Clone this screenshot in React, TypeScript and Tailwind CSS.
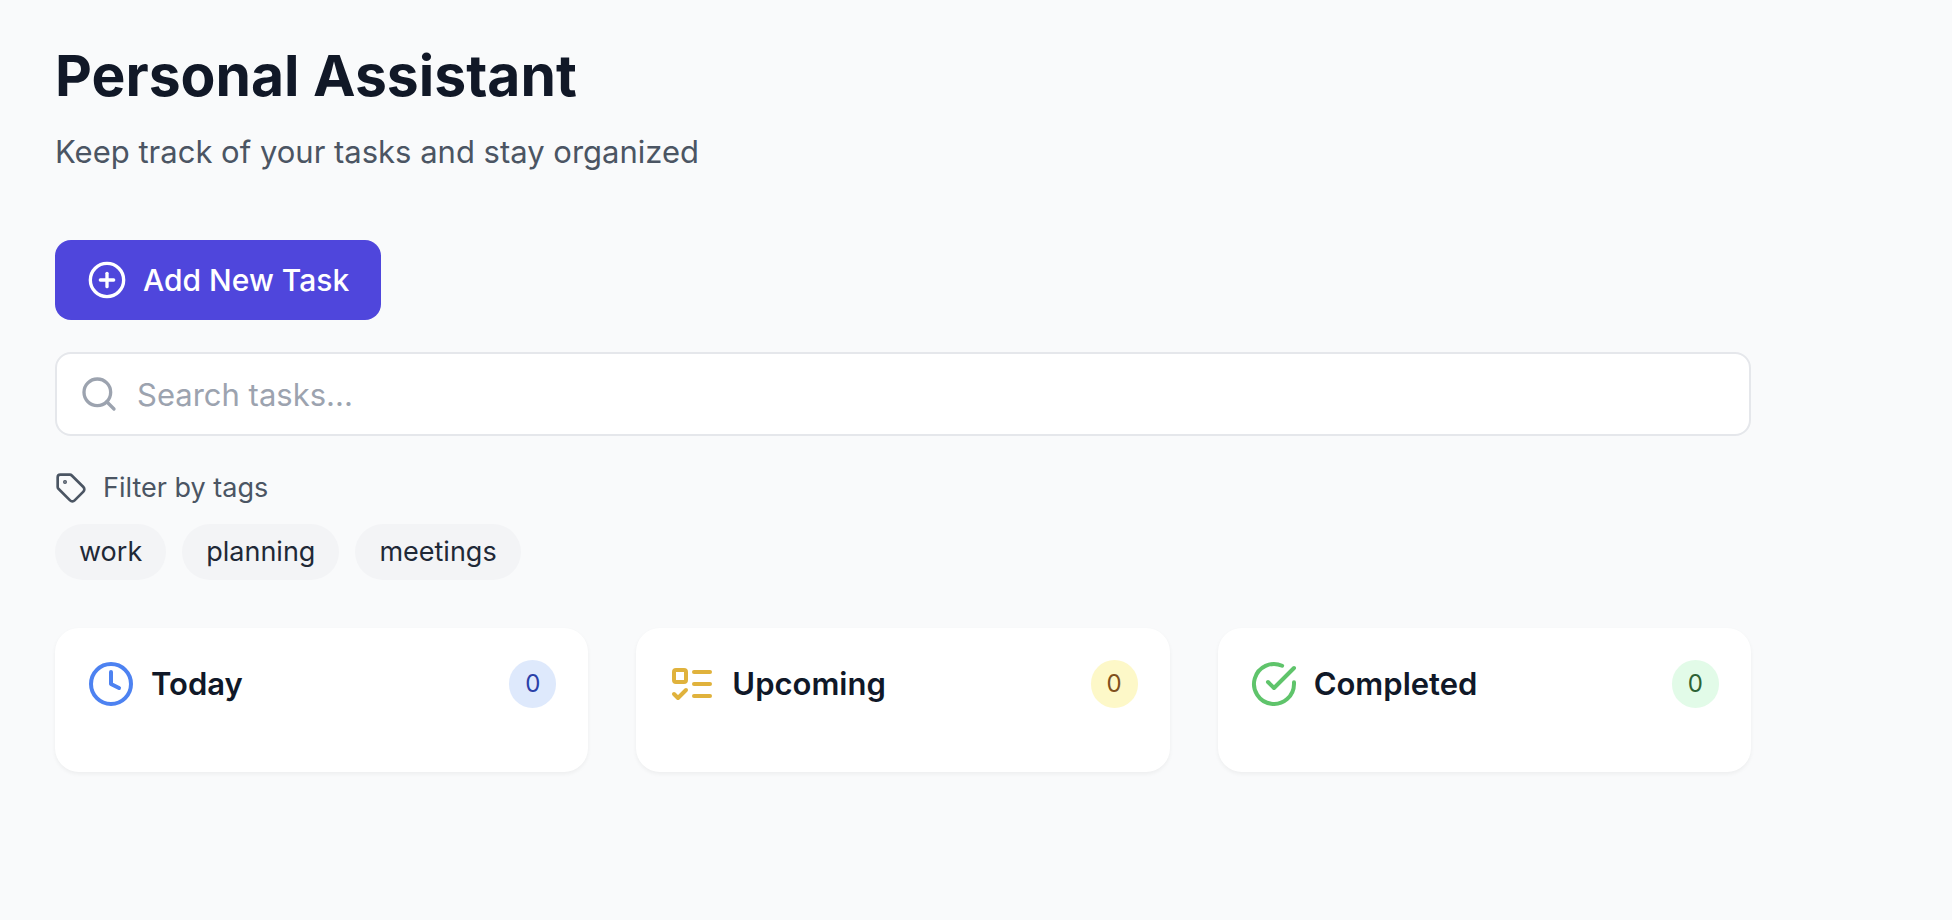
import type { ReactNode } from "react";
import { CirclePlus, Clock, Search, Tag } from "lucide-react";

function ListTodoIcon() {
  return (
    <svg className="size-12 shrink-0 text-[#e0b23c]" viewBox="0 0 24 24" fill="none" stroke="currentColor" strokeWidth="2" strokeLinecap="round" strokeLinejoin="round" aria-hidden="true">
      <rect x="3" y="5" width="6" height="6" rx="1" />
      <path d="m3 17 2 2 4-4" />
      <path d="M13 6h8" />
      <path d="M13 12h8" />
      <path d="M13 18h8" />
    </svg>
  );
}

function DoneIcon() {
  return (
    <svg className="size-12 shrink-0 text-[#5fc46b]" viewBox="0 0 24 24" fill="none" stroke="currentColor" strokeWidth="2" strokeLinecap="round" strokeLinejoin="round" aria-hidden="true">
      <path d="M22 11.08V12a10 10 0 1 1-5.93-9.14" />
      <path d="m9 11 3 3L22 4" />
    </svg>
  );
}

type ColumnProps = { title: string; count: number; icon: ReactNode; badge: string };

function Column({ title, count, icon, badge }: ColumnProps) {
  return (
    <section className="rounded-3xl bg-white p-8 shadow-[0_2px_4px_rgba(0,0,0,0.05)]">
      <div className="mb-8 flex items-center justify-between">
        <div className="flex items-center gap-4">
          {icon}
          <h2 className="text-[31px] leading-12 font-semibold text-gray-900">{title}</h2>
        </div>
        <span className={`rounded-full px-4 py-2 text-2xl leading-8 ${badge}`}>{count}</span>
      </div>
    </section>
  );
}

const tags = ["work", "planning", "meetings"];

export default function App() {
  return (
    <div className="min-h-screen bg-[#f9fafb] px-[55px] py-10 font-['Inter',sans-serif]">
      <main className="max-w-[1696px]">
        <header className="mb-16">
          <h1 className="text-[57px] leading-[72px] font-bold text-[#111827]">Personal Assistant</h1>
          <p className="mt-4 text-[31px] leading-12 text-[#4b5563]">Keep track of your tasks and stay organized</p>
        </header>

        <button type="button" className="flex h-20 items-center gap-4 rounded-2xl bg-[#4f46dc] px-8 text-[30px] font-medium text-white">
          <CirclePlus className="size-10" />
          Add New Task
        </button>

        <div className="mt-8 flex items-center gap-[18px] rounded-2xl border-2 border-[#e5e7eb] bg-white px-[22px] py-4">
          <Search className="size-10 shrink-0 text-[#9ca3af]" />
          <input type="text" aria-label="Search tasks" placeholder="Search tasks..." className="h-12 w-full bg-transparent text-[31px] text-gray-900 outline-none placeholder:text-[#9ca3af]" />
        </div>

        <div className="mt-8 mb-4 flex items-center gap-4 text-[#4b5563]">
          <Tag className="size-8" />
          <span className="text-[27px] leading-10">Filter by tags</span>
        </div>
        <div className="flex flex-wrap gap-4">
          {tags.map((tag) => (
            <button key={tag} type="button" className="rounded-full bg-[#f3f4f6] px-6 py-2 text-[27px] leading-10 text-[#1f2937]">
              {tag}
            </button>
          ))}
        </div>

        <div className="mt-12 grid grid-cols-3 gap-12">
          <Column title="Today" count={0} icon={<Clock className="size-12 text-[#4d82f1]" />} badge="bg-[#dee9fc] text-[#2a40a8]" />
          <Column title="Upcoming" count={0} icon={<ListTodoIcon />} badge="bg-[#fdf8c8] text-[#80501c]" />
          <Column title="Completed" count={0} icon={<DoneIcon />} badge="bg-[#e2fbe8] text-[#2d6335]" />
        </div>
      </main>
    </div>
  );
}
